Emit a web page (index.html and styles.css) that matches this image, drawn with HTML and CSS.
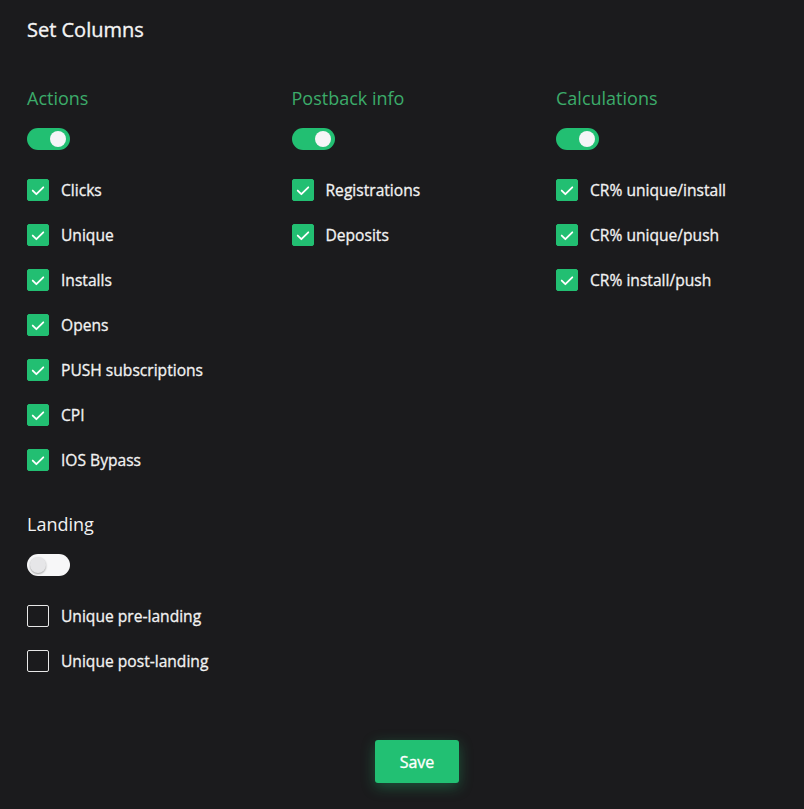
FILE: index.html
```html
<!DOCTYPE html>
<html>
<head>
<meta charset="utf-8">
<link rel="stylesheet" href="styles.css">
</head>
<body>
<div class="modal">
  <h1 class="title">Set Columns</h1>
  <div class="grid">
    <section class="group">
      <h2 class="group-title">Actions</h2>
      <span class="toggle on"><span class="knob"></span></span>
      <ul class="list">
        <li class="item"><span class="box checked"><svg viewBox="0 0 22 22"><path d="M5.2 11.6l4 4L16.8 8"/></svg></span>Clicks</li>
        <li class="item"><span class="box checked"><svg viewBox="0 0 22 22"><path d="M5.2 11.6l4 4L16.8 8"/></svg></span>Unique</li>
        <li class="item"><span class="box checked"><svg viewBox="0 0 22 22"><path d="M5.2 11.6l4 4L16.8 8"/></svg></span>Installs</li>
        <li class="item"><span class="box checked"><svg viewBox="0 0 22 22"><path d="M5.2 11.6l4 4L16.8 8"/></svg></span>Opens</li>
        <li class="item"><span class="box checked"><svg viewBox="0 0 22 22"><path d="M5.2 11.6l4 4L16.8 8"/></svg></span>PUSH subscriptions</li>
        <li class="item"><span class="box checked"><svg viewBox="0 0 22 22"><path d="M5.2 11.6l4 4L16.8 8"/></svg></span>CPI</li>
        <li class="item"><span class="box checked"><svg viewBox="0 0 22 22"><path d="M5.2 11.6l4 4L16.8 8"/></svg></span>IOS Bypass</li>
      </ul>
    </section>
    <section class="group">
      <h2 class="group-title">Postback info</h2>
      <span class="toggle on"><span class="knob"></span></span>
      <ul class="list">
        <li class="item"><span class="box checked"><svg viewBox="0 0 22 22"><path d="M5.2 11.6l4 4L16.8 8"/></svg></span>Registrations</li>
        <li class="item"><span class="box checked"><svg viewBox="0 0 22 22"><path d="M5.2 11.6l4 4L16.8 8"/></svg></span>Deposits</li>
      </ul>
    </section>
    <section class="group">
      <h2 class="group-title">Calculations</h2>
      <span class="toggle on"><span class="knob"></span></span>
      <ul class="list">
        <li class="item"><span class="box checked"><svg viewBox="0 0 22 22"><path d="M5.2 11.6l4 4L16.8 8"/></svg></span>CR% unique/install</li>
        <li class="item"><span class="box checked"><svg viewBox="0 0 22 22"><path d="M5.2 11.6l4 4L16.8 8"/></svg></span>CR% unique/push</li>
        <li class="item"><span class="box checked"><svg viewBox="0 0 22 22"><path d="M5.2 11.6l4 4L16.8 8"/></svg></span>CR% install/push</li>
      </ul>
    </section>
  </div>
  <section class="group landing">
    <h2 class="group-title plain">Landing</h2>
    <span class="toggle off"><span class="knob"></span></span>
    <ul class="list">
      <li class="item"><span class="box"></span>Unique pre-landing</li>
      <li class="item"><span class="box"></span>Unique post-landing</li>
    </ul>
  </section>
  <div class="footer">
    <button class="save">Save</button>
  </div>
</div>
</body>
</html>
```
FILE: styles.css
```css
* { box-sizing: border-box; }
html, body {
  margin: 0;
  padding: 0;
  background: #1b1b1d;
}
body {
  font-family: "Open Sans", "Noto Sans", sans-serif;
  color: #f2f2f2;
  width: 804px;
  height: 809px;
  overflow: hidden;
}
.modal {
  padding: 18px 0 0 27px;
}
.title {
  margin: 0;
  font-size: 20px;
  line-height: 24px;
  font-weight: 400;
  -webkit-text-stroke: 0.35px #f4f4f4;
  color: #f4f4f4;
}
.grid {
  display: grid;
  grid-template-columns: 264.5px 264.5px 264.5px;
  margin-top: 44px;
}
.group {
  display: flex;
  flex-direction: column;
  align-items: flex-start;
}
.group-title {
  margin: 0 0 18px;
  font-size: 18px;
  line-height: 24px;
  font-weight: 400;
  color: #3cab6a;
}
.group-title.plain {
  color: #f2f2f2;
}
.toggle {
  position: relative;
  display: block;
  width: 43px;
  height: 22px;
  border-radius: 11px;
}
.toggle.on { background: #22bf72; }
.toggle.off { background: #f7f7f8; }
.knob {
  position: absolute;
  top: 3px;
  width: 16px;
  height: 16px;
  border-radius: 50%;
}
.toggle.on .knob {
  right: 4px;
  background: #f5f5f7;
}
.toggle.off .knob {
  left: 3px;
  background: #e6e6e8;
  box-shadow: 0 1px 2px rgba(0,0,0,0.35);
}
.list {
  list-style: none;
  margin: 29px 0 0;
  padding: 0;
  display: flex;
  flex-direction: column;
  gap: 23px;
}
.item {
  display: flex;
  align-items: center;
  height: 22px;
  line-height: 20px;
  padding-bottom: 1px;
  font-size: 15.6px;
  font-weight: 400;
  -webkit-text-stroke: 0.3px #f2f2f2;
  color: #f2f2f2;
}
.box {
  width: 22px;
  height: 22px;
  margin-right: 12px;
  margin-top: 1px;
  border-radius: 2px;
  border: 1px solid #e8e8e8;
  flex: none;
  display: flex;
  align-items: center;
  justify-content: center;
}
.box.checked {
  background: #22bf72;
  border-color: #22bf72;
}
.box svg {
  width: 22px;
  height: 22px;
  fill: none;
  stroke: #fff;
  stroke-width: 2;
  stroke-linecap: round;
  stroke-linejoin: round;
}
.landing {
  margin-top: 41px;
}
.footer {
  display: flex;
  justify-content: center;
  margin-top: 68px;
  margin-left: -27px;
  padding-left: 30px;
}
.save {
  width: 84px;
  height: 43px;
  border: none;
  border-radius: 3px;
  background: #22c073;
  color: #fff;
  font-family: "Open Sans", sans-serif;
  font-size: 16px;
  font-weight: 400;
  -webkit-text-stroke: 0.35px #fff;
  box-shadow: 0 4px 14px rgba(34,192,115,0.35);
}
```
